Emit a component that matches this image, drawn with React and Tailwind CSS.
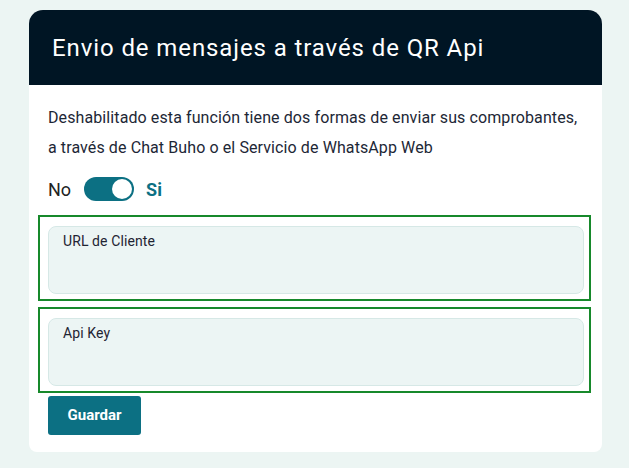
import React, { useState } from 'react';

function Field({ label }) {
  return (
    <div className="border-2 border-[#17892b] pl-2 pr-[5px] pt-[9px] pb-[5px]">
      <div className="h-[68px] rounded-lg border border-[#d6e8e6] bg-[#ecf5f4] pl-[14px] pt-[2px]">
        <span className="text-[14px] leading-5 tracking-[0.1px] text-[#1f2433]">{label}</span>
      </div>
    </div>
  );
}

function App() {
  const [enabled, setEnabled] = useState(true);

  return (
    <div className="min-h-screen bg-[#ecf5f3] pt-[10px] px-[29px] pb-4 font-['Roboto',sans-serif]">
      <div className="w-[573px] bg-white rounded-t-[14px] rounded-b-[8px] overflow-hidden">
        <div className="h-[75px] bg-[#001524] flex items-center pl-[23px]">
          <h1 className="text-[24px] tracking-[0.9px] text-white font-normal leading-none">
            Envio de mensajes a través de QR Api
          </h1>
        </div>

        <div className="pl-[9px] pr-[11px] pt-[18px] pb-[17px]">
          <p className="pl-[10px] text-[16px] tracking-[0.1px] leading-[30px] text-[#1d2736] whitespace-nowrap">
            Deshabilitado esta función tiene dos formas de enviar sus comprobantes,
            <br />
            a través de Chat Buho o el Servicio de WhatsApp Web
          </p>

          {/* switch */}
          <div className="pl-[10px] mt-[14px] mb-[14px] flex items-center h-6">
            <span className="text-[18px] text-[#222] mr-[13px]">No</span>
            <button
              type="button"
              onClick={() => setEnabled(!enabled)}
              className={`w-[50px] h-6 rounded-full flex items-center px-[2px] ${enabled ? 'bg-[#0c7083] justify-end' : 'bg-gray-300 justify-start'}`}
            >
              <span className="w-5 h-5 rounded-full bg-white block" />
            </button>
            <span className="text-[18px] font-bold text-[#0c7083] ml-3">Si</span>
          </div>

          <div className="flex flex-col gap-[6px]">
            <Field label="URL de Cliente" />
            <Field label="Api Key" />
          </div>

          <div className="pl-[10px] mt-[3px]">
            <button type="button" className="w-[93px] h-[39px] rounded-[3px] bg-[#0c7083] text-white text-[15px] font-bold">
              Guardar
            </button>
          </div>
        </div>
      </div>
    </div>
  );
}

export default App;
